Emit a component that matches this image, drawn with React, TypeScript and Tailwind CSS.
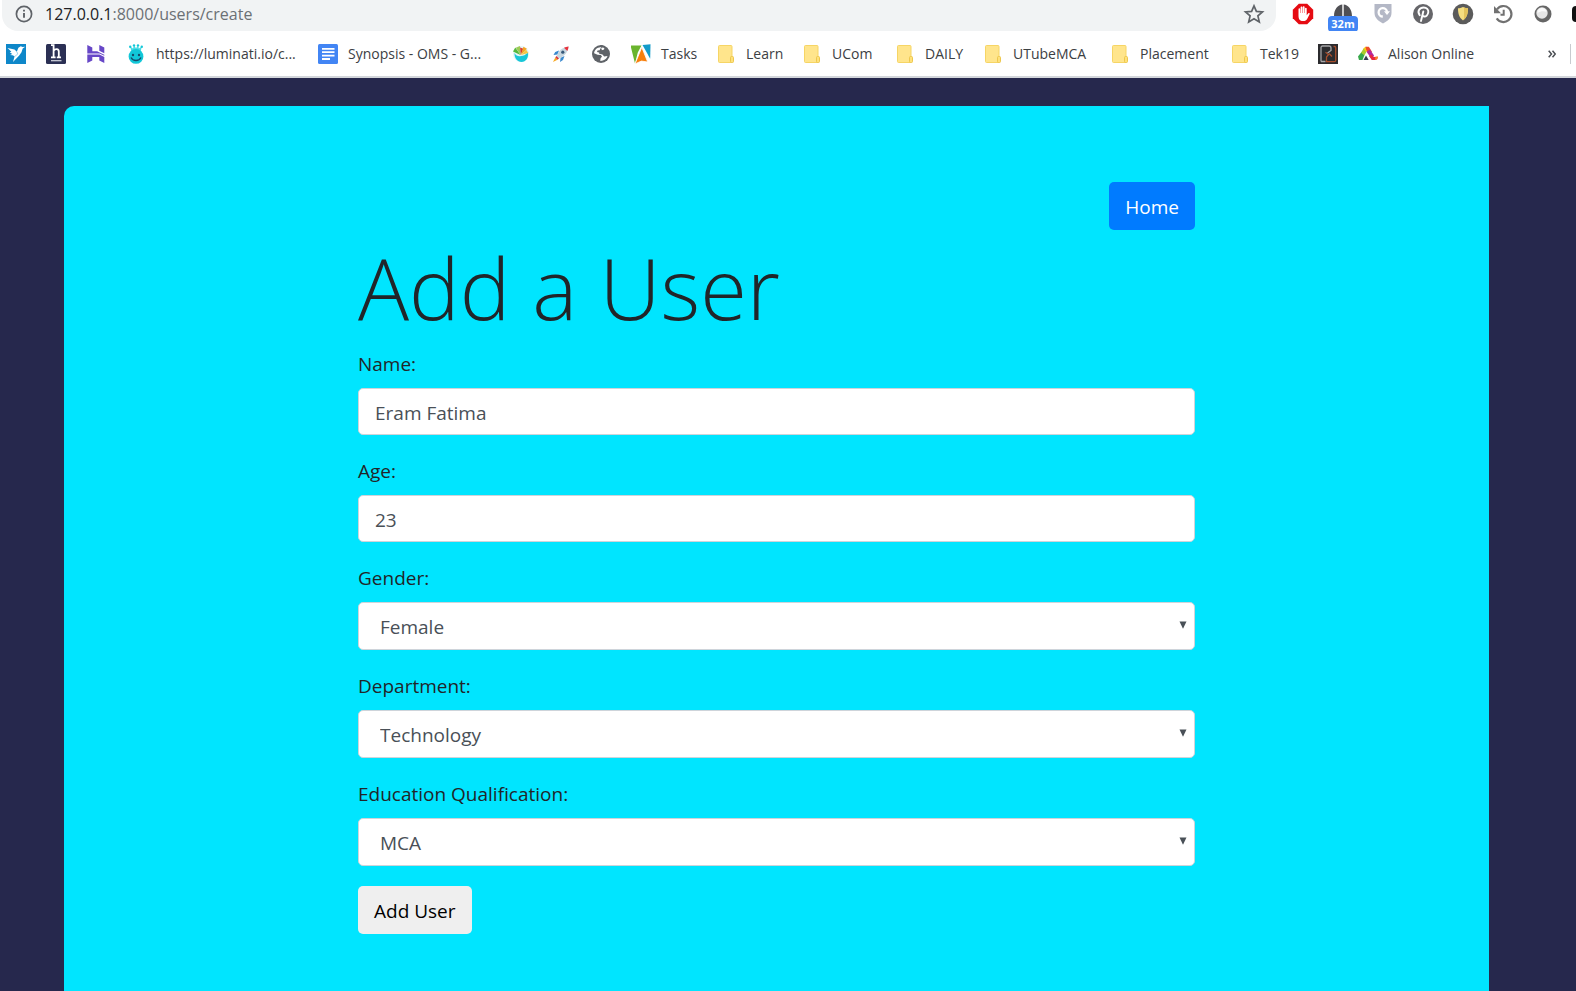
import { useState, type ReactNode } from "react";

/* ---------- Bookmark icons (20 x 20) ---------- */

const BirdIcon = () => (
  <svg viewBox="0 0 20 20" className="size-5">
    <rect width="20" height="20" fill="#0e87c9" />
    <path d="M1.500 4 8.500 5.400l2.300 2.300 1.600-4 2.400-1.500 1.800.7 2.600-.2-2.500 1.700-1.200 3.900-2.300 3.300L7 18l1.600-5.800-2.100-1-2.500-.3 2.300-1-2.600-1.700 1.700-.4z" fill="#fff" />
    <path d="m10.800 7.700 1 2.300-3 2.400" stroke="#8cc8e8" strokeWidth=".8" fill="none" />
  </svg>
);

const LetterHIcon = () => (
  <svg viewBox="0 0 20 20" className="size-5">
    <rect width="20" height="20" rx="1.500" fill="#2b3054" />
    <path d="M5 1.200h2.600v12.300M5 13.400h4.600M7.800 6.600c1.400-2 5-2.200 5 1v5.800M10.800 13.400h4.200" stroke="#fff" strokeWidth="1.800" fill="none" />
    <path d="M5 16.700h10.500" stroke="#d4d6e0" strokeWidth="1.200" />
  </svg>
);

const HostIcon = () => (
  <svg viewBox="0 0 20 20" className="size-5" fill="#6747c7">
    <path d="M1.300 1 6.300 3.500v3.700h4.800l7.200 3.600V9.300l-5-2.500V1l5 2.500v8.300L13.500 9.500H1.300z" />
    <path d="M1.300 10.600h12.200l4.800 2.400v6l-5-2.500V13H6.300v3.500l-5 2.500z" />
  </svg>
);

const CrownFaceIcon = () => (
  <svg viewBox="0 0 20 20" className="size-5">
    <path d="M4.200 2.400 5.200 7h9.600l1-4.600-2.900 2L12 1.200l-2 3-2-3-1 3.200z" fill="#4adbe5" />
    <g fill="#12c7d8">
      <circle cx="4.200" cy="2.700" r="1.200" />
      <circle cx="8" cy="1.400" r="1.200" />
      <circle cx="12" cy="1.400" r="1.200" />
      <circle cx="15.800" cy="2.700" r="1.200" />
      <circle cx="10" cy="12.400" r="7.400" />
    </g>
    <circle cx="7" cy="11" r="1.200" fill="#174a6b" />
    <circle cx="13" cy="11" r="1.200" fill="#174a6b" />
    <path d="M5 13.500c2 4 8 4 10 0" stroke="#174a6b" strokeWidth="1.300" fill="none" />
  </svg>
);

const DocIcon = () => (
  <svg viewBox="0 0 20 20" className="size-5">
    <rect width="20" height="20" rx="1.500" fill="#4285f4" />
    <path d="M4 4.800h12.500M4 8.200h12.500M4 11.600h12.500M4 15h8" stroke="#fff" strokeWidth="1.800" />
  </svg>
);

const FanIcon = () => (
  <svg viewBox="0 0 20 20" className="size-5">
    <circle cx="10" cy="10" r="8" fill="#e4f5f7" />
    <path d="M3.500 9c1.500 2.800 4 3.600 6.500 3 2.500 0 4.500-1 6.800-3.500 1.200 5-2 9.500-6.300 9.500-4 0-7.200-3.500-7-9z" fill="#18c7d8" />
    <path d="M9.500 11 2 7.500l2.300-4z" fill="#56b83d" />
    <path d="M9.500 11 4.800 3.800 9 2z" fill="#9fcb55" />
    <path d="m9.700 11-.6-7.500 3.300 1.200z" fill="#d93b2f" />
    <path d="m10 11 2.400-8.300 3.500 2z" fill="#f5a623" />
    <path d="m10.200 11 4.800-5.500 2.300 3.500z" fill="#f7c744" />
  </svg>
);

const RocketIcon = () => (
  <svg viewBox="0 0 20 20" className="size-5">
    <path d="M8 6.500 4.200 8 2.500 11l4-.6zM13.500 12 12 16l-3 2 .6-4.200z" fill="#3989ce" />
    <path d="M5.500 12C8 6.500 11 3.500 17.500 2.500 16.500 9 13.500 12 8 14.500z" fill="#c8d6df" />
    <path d="M13 3.800c1.400-.7 2.800-1.100 4.600-1.300-.2 1.800-.6 3.200-1.300 4.600z" fill="#e8323c" />
    <circle cx="11.800" cy="8.200" r="1.600" fill="#37597a" />
    <path d="m5.500 12 2.500 2.500-1.600 1.200-2.100-2.100z" fill="#d9343c" />
    <path d="m4.300 13.400 2.200 2.300L2 18z" fill="#f7a823" />
  </svg>
);

const GlobeIcon = () => (
  <svg viewBox="0 0 20 20" className="size-5">
    <circle cx="10" cy="10" r="9" fill="#5f6368" />
    <path d="M9.500 3.200C6 3.300 3.400 5.800 3.100 9.300l3.500 1.500 3.200.2 1.200 1.500-1.500 1.900-.2 2.500c3.500.1 6.400-2 7.200-4.900l-3.300.4-1.700-2-3.300-.6-.1-1.500 2.300-.4.500-1.600 2.200-.9.200-1.400c-1.100-.6-2.400-.9-3.800-.8z" fill="#fff" />
    <path d="m9.500 1 3 .6-1.200 2-2 .9-.6 1.700-2.200.2L6 8.100l2 .5 3 .3.900 1.100" fill="#5f6368" />
  </svg>
);

const TasksIcon = () => (
  <svg viewBox="0 0 20 20" className="size-5">
    <path d="M0 1.500h10.500L6.800 8.600 4 19.500 0 3.500z" fill="#6ab42d" />
    <path d="m11.500 1 8-.8-.3 14.500z" fill="#139bc9" />
    <path d="M10.800 3.300 16.700 18l-6.300-.9L4 19.900z" fill="#f77f0d" stroke="#fff" strokeWidth=".8" />
  </svg>
);

const FolderIcon = () => (
  <svg viewBox="0 0 20 20" className="size-5">
    <rect x="2.500" y="1.500" width="13.500" height="17" rx="1" fill="#ffe58c" stroke="#f6d565" />
    <rect x="14.500" y="12.500" width="3" height="6" rx="1" fill="#ffe17a" stroke="#edc74d" />
  </svg>
);

const DarkTileIcon = () => (
  <svg viewBox="0 0 20 20" className="size-5">
    <rect width="20" height="20" fill="#2b2b2e" />
    <path d="M3 17.500V3.500c0-1 .7-1.500 1.500-1.500H11c1.500 0 2 .7 2 2v2.500L9.500 9M3 17.500h4.500" stroke="#a5a5a7" strokeWidth="1.300" fill="none" />
    <path d="M15.500 2.500h1.200c.8 0 1 .4 1 1.200v12.500c0 1-.5 1.500-1.400 1.500H8.500V13l2-2.500-3-2.300M11 9.500l3 3" stroke="#a64e2d" strokeWidth="1.300" fill="none" />
  </svg>
);

const AlisonIcon = () => (
  <svg viewBox="0 0 20 20" className="size-5">
    <path d="M0 12.500 3.500 8l3 3-2 5H1z" fill="#37a84a" />
    <path d="m3 8.800 3-5 3.500 2-3 5.500z" fill="#a9ca2c" />
    <path d="m5.600 4.300 2-1.600 3 .6-2.400 5z" fill="#fbc618" />
    <path d="M7.500 2.800h3.300l3.200 5-3.600 1.500-2.200-3.500z" fill="#ee4d2b" />
    <path d="m12 5.500 4 6-2 4-5.500-7.800z" fill="#b5259b" />
    <path d="m11 12 2.500-1.500 2 2.500 4.300-.3c0 2-1 3.300-3 3.300h-3z" fill="#e7263f" />
    <path d="m17.500 12.700 2.500-.3-.8 2.800-2.200.3z" fill="#f58a1f" />
    <path d="M5.500 16 8 11.500l2.700 4.500z" fill="#343c53" />
  </svg>
);

type Bookmark = { icon: ReactNode; name: string; label?: string; width?: string };

const bookmarks: Bookmark[] = [
  { icon: <BirdIcon />, name: "Freelancer" },
  { icon: <LetterHIcon />, name: "Hackr" },
  { icon: <HostIcon />, name: "Hosting" },
  { icon: <CrownFaceIcon />, name: "Luminati", label: "https://luminati.io/c...", width: "w-[142px]" },
  { icon: <DocIcon />, name: "Synopsis", label: "Synopsis - OMS - G...", width: "w-[143px]" },
  { icon: <FanIcon />, name: "Palette" },
  { icon: <RocketIcon />, name: "Rocket" },
  { icon: <GlobeIcon />, name: "Web" },
  { icon: <TasksIcon />, name: "Tasks", label: "Tasks", width: "w-[35px]" },
  { icon: <FolderIcon />, name: "Learn", label: "Learn", width: "w-9" },
  { icon: <FolderIcon />, name: "UCom", label: "UCom", width: "w-[43px]" },
  { icon: <FolderIcon />, name: "DAILY", label: "DAILY", width: "w-[38px]" },
  { icon: <FolderIcon />, name: "UTubeMCA", label: "UTubeMCA", width: "w-[77px]" },
  { icon: <FolderIcon />, name: "Placement", label: "Placement", width: "w-[70px]" },
  { icon: <FolderIcon />, name: "Tek19", label: "Tek19", width: "w-[38px]" },
  { icon: <DarkTileIcon />, name: "Notebook" },
  { icon: <AlisonIcon />, name: "Alison", label: "Alison Online", width: "w-[90px]" },
];

/* ---------- Extension icons (22 x 22) ---------- */

const AdBlockIcon = () => (
  <svg viewBox="0 0 22 22" className="size-[22px]">
    <path d="M6.800.8h8.400l6 6v8.400l-6 6H6.800l-6-6V6.800z" fill="#e60b12" />
    <path d="M6.500 12.500V6.300c0-1.300 1.700-1.300 1.700 0V10h.4V4.500c0-1.300 1.800-1.300 1.800 0V10h.4V4.200c0-1.300 1.800-1.300 1.800 0V10h.4V5.600c0-1.200 1.700-1.200 1.700 0v6.600l1.600-1.900c.8-.8 1.800 0 1.300.9l-2.300 4.500c-.8 1.600-2 2.300-4.300 2.300-3.100 0-4.500-1.700-4.500-5.500z" fill="#fff" />
  </svg>
);

const TimerIcon = () => (
  <span className="relative block size-[22px]">
    <svg viewBox="0 0 22 22" className="size-[22px]">
      <path d="M2 13C2 6 6 2 10.300 1.500V13zM11.700 1.500C16 2 20 6 20 13h-8.300z" fill="#505054" />
    </svg>
    <span className="absolute -left-1 top-[13px] flex h-4 w-[30px] items-center justify-center rounded-sm bg-[#4285f4] text-[11px] font-bold leading-4 text-white">32m</span>
  </span>
);

const ShieldArrowIcon = () => (
  <svg viewBox="0 0 22 22" className="size-[22px]">
    <path d="M2.500 1h17v9c0 5-4 8-8.500 10.500C6.500 18 2.500 15 2.500 10z" fill="#b4b8c6" />
    <path d="M10.800 13.500a4.200 4.200 0 1 1 4.200-4.700" stroke="#fff" strokeWidth="2.300" fill="none" />
    <path d="m12 8.300h6l-3 3.700z" fill="#fff" />
  </svg>
);

const PinterestIcon = () => (
  <svg viewBox="0 0 22 22" className="size-[22px]">
    <circle cx="11" cy="11" r="10" fill="#66666a" />
    <path d="M7.700 12.200c-3-4 .1-7.700 4-7.700 3 0 5 2 4.600 4.700-.4 3-2.300 4.600-4.200 4.300-1-.1-1.500-.7-1.600-1.300M11.300 8.500 9 18" stroke="#fff" strokeWidth="1.900" fill="none" strokeLinecap="round" />
  </svg>
);

const GoldShieldIcon = () => (
  <svg viewBox="0 0 22 22" className="size-[22px]">
    <circle cx="11" cy="11" r="10.300" fill="#5b5b5b" />
    <path d="M11 4c1.700 1 3.200 1.300 5 1.300 0 6-1.400 9.400-5 12.200-3.600-2.800-5-6.200-5-12.200C7.800 5.300 9.300 5 11 4z" fill="#f5de80" />
    <path d="M12 4.500v12.200c2.800-2.600 4-5.700 4-11.400-1.500 0-2.700-.2-4-.8z" fill="#e3c35c" />
  </svg>
);

const HistoryIcon = () => (
  <svg viewBox="0 0 22 22" className="size-[22px]" fill="none" stroke="#717171" strokeWidth="2.200">
    <path d="M5 6.300a8 8 0 1 1-.3 9" />
    <path d="M11.700 6.800v5H8.500" strokeWidth="2" />
    <path d="M2 3v7.200h7z" fill="#717171" stroke="none" />
  </svg>
);

const RingIcon = () => (
  <svg viewBox="0 0 22 22" className="size-[22px]">
    <circle cx="11" cy="11" r="8.500" fill="#666" />
    <circle cx="10" cy="10" r="5.700" fill="#e6e6e6" />
    <path d="M5.500 10a4.500 4.500 0 0 1 9-1c-2-1.500-6-1-9 1z" fill="#fafafa" />
  </svg>
);

const extensions = [
  { name: "Ad blocker", icon: <AdBlockIcon /> },
  { name: "Timer", icon: <TimerIcon /> },
  { name: "Privacy shield", icon: <ShieldArrowIcon /> },
  { name: "Pinterest", icon: <PinterestIcon /> },
  { name: "Gold shield", icon: <GoldShieldIcon /> },
  { name: "History", icon: <HistoryIcon /> },
  { name: "Ring", icon: <RingIcon /> },
];

function BrowserBar() {
  return (
    <header className="border-b-2 border-[#d3d6db] bg-white text-[#3c4043]">
      <div className="flex h-[31px] items-start overflow-hidden pl-0.5">
        <div className="flex h-[31px] min-w-0 flex-1 items-center rounded-b-2xl bg-[#f1f3f4] pb-1 pl-[13px] pr-2.5">
          <button type="button" aria-label="Site information" className="mr-3 shrink-0">
            <svg viewBox="0 0 18 18" className="size-[18px]" fill="none" stroke="#5f6368" strokeWidth="1.700">
              <circle cx="9" cy="9" r="7.600" />
              <path d="M9 8v4.800M9 4.800v1.800" strokeWidth="1.900" />
            </svg>
          </button>
          <span className="flex-1 truncate text-base leading-6 text-[#6b7074]">
            <span className="text-[#202124]">127.0.0.1</span>:8000/users/create
          </span>
          <button type="button" aria-label="Bookmark this page" className="shrink-0">
            <svg viewBox="0 0 24 24" className="size-6" fill="none" stroke="#5f6368" strokeWidth="1.700">
              <path d="m12 3.800 2.400 5.600 6.100.5-4.600 4 1.400 6L12 16.700l-5.300 3.200 1.400-6-4.600-4 6.100-.5z" />
            </svg>
          </button>
        </div>
        <div className="ml-4 flex h-7 shrink-0 items-center gap-[18px]">
          {extensions.map((e) => (
            <button key={e.name} type="button" aria-label={e.name}>
              {e.icon}
            </button>
          ))}
          <span className="h-4 w-1 rounded-l-sm bg-[#111]" />
        </div>
      </div>
      <nav aria-label="Bookmarks" className="flex h-[45px] items-center pl-1.5 pr-[5px]">
        <div className="flex min-w-0 flex-1 items-center gap-5 overflow-hidden">
          {bookmarks.map((b) => (
            <a key={b.name} href="#" aria-label={b.name} className="flex shrink-0 items-center gap-2.5">
              {b.icon}
              {b.label && <span className={"whitespace-nowrap text-sm leading-5 " + b.width}>{b.label}</span>}
            </a>
          ))}
        </div>
        <button type="button" aria-label="More bookmarks" className="px-[14px]">
          <svg viewBox="0 0 8 8" className="size-2" fill="none" stroke="#4b4f54" strokeWidth="1.500">
            <path d="m.7.700 2.800 3.300L.7 7.300M4.500.7 7.300 4 4.500 7.300" />
          </svg>
        </button>
        <span className="h-5 w-px bg-[#c8cbcf]" />
      </nav>
    </header>
  );
}

/* ---------- Form ---------- */

const labelClass = "mb-2 block leading-8";
const controlClass =
  "block w-full rounded-[5px] border border-[#ced4da] bg-white pt-0.5 text-[19px] text-[#495057] outline-none focus:border-[#80bdff]";

function TextField({ id, label, initial }: { id: string; label: string; initial: string }) {
  const [value, setValue] = useState(initial);
  return (
    <div className="mb-5">
      <label htmlFor={id} className={labelClass}>{label}</label>
      <input id={id} type="text" value={value} onChange={(e) => setValue(e.target.value)} className={controlClass + " h-[47px] px-4"} />
    </div>
  );
}

function SelectField({ id, label, options }: { id: string; label: string; options: string[] }) {
  return (
    <div className="mb-5">
      <label htmlFor={id} className={labelClass}>{label}</label>
      <div className="relative">
        <select id={id} className={controlClass + " h-12 appearance-none pl-[21px] pr-8"}>
          {options.map((o) => (
            <option key={o}>{o}</option>
          ))}
        </select>
        <svg viewBox="0 0 8 8" className="pointer-events-none absolute right-2 top-[19px] size-2" fill="#495057">
          <path d="M.5.500h7L4 7.800z" />
        </svg>
      </div>
    </div>
  );
}

export default function App() {
  return (
    <div className="flex min-h-screen flex-col bg-[#26284d] font-['Open_Sans','Noto_Sans',sans-serif]">
      <BrowserBar />
      <main className="flex flex-1 pl-16 pr-[87px] pt-7">
        <section className="flex-1 rounded-tl-[10px] bg-[#00e5ff] pb-12 pt-[76px] text-[19px] text-[#212529]">
          <div className="mx-auto w-full max-w-[837px]">
            <div className="flex justify-end">
              <a href="#" className="flex h-12 items-center rounded-[5px] bg-[#007bff] px-4 pt-0.5 text-white">Home</a>
            </div>
            <h1 className="mb-1 text-[85px] font-light leading-[114px]">Add a User</h1>
            <form onSubmit={(e) => e.preventDefault()}>
              <TextField id="name" label="Name:" initial="Eram Fatima" />
              <TextField id="age" label="Age:" initial="23" />
              <SelectField id="gender" label="Gender:" options={["Female", "Male"]} />
              <SelectField id="department" label="Department:" options={["Technology"]} />
              <SelectField id="education" label="Education Qualification:" options={["MCA"]} />
              <button type="submit" className="h-12 rounded-[5px] bg-[#efefef] px-4 pt-0.5 text-black">Add User</button>
            </form>
          </div>
        </section>
      </main>
    </div>
  );
}
